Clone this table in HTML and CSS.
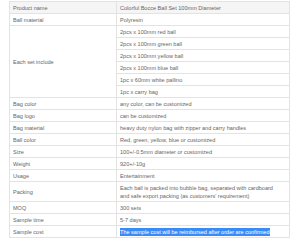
FILE: index.html
```html
<!DOCTYPE html>
<html lang="en">
<head>
  <meta charset="UTF-8" />
  <title>Colorful Bocce Ball Set</title>
  <link rel="stylesheet" href="styles.css">
</head>
<body>
  <!-- Product spec table -->
  <table class="spec">
    <tr class="head">
      <td class="label">Product name</td>
      <td>Colorful Bocce Ball Set 100mm Diameter</td>
    </tr>
    <tr>
      <td class="label">Ball material</td>
      <td>Polyresin</td>
    </tr>
    <tr>
      <td class="label" rowspan="6">Each set include</td>
      <td>2pcs x 100mm red ball</td>
    </tr>
    <tr><td>2pcs x 100mm green ball</td></tr>
    <tr><td>2pcs x 100mm yellow ball</td></tr>
    <tr><td>2pcs x 100mm blue ball</td></tr>
    <tr><td>1pc x 60mm white pallino</td></tr>
    <tr><td>1pc x carry bag</td></tr>
    <tr>
      <td class="label">Bag color</td>
      <td>any color, can be customized</td>
    </tr>
    <tr>
      <td class="label">Bag logo</td>
      <td>can be customized</td>
    </tr>
    <tr>
      <td class="label">Bag material</td>
      <td>heavy duty nylon bag with zipper and carry handles</td>
    </tr>
    <tr>
      <td class="label">Ball color</td>
      <td>Red, green, yellow, blue or customized</td>
    </tr>
    <tr>
      <td class="label">Size</td>
      <td>100+/-0.5mm diameter or customized</td>
    </tr>
    <tr>
      <td class="label">Weight</td>
      <td>920+/-10g</td>
    </tr>
    <tr>
      <td class="label">Usage</td>
      <td>Entertainment</td>
    </tr>
    <tr>
      <td class="label">Packing</td>
      <td>Each ball is packed into bubble bag, separated with cardboard<br>and safe export packing (as customers' requirement)</td>
    </tr>
    <tr>
      <td class="label">MOQ</td>
      <td>300 sets</td>
    </tr>
    <tr>
      <td class="label">Sample time</td>
      <td>5-7 days</td>
    </tr>
    <tr>
      <td class="label">Sample cost</td>
      <td><span class="selected">The sample cost will be reimbursed after order are confirmed</span></td>
    </tr>
  </table>
</body>
</html>
```

FILE: styles.css
```css
/* Base */
* {
  margin: 0;
  padding: 0;
  box-sizing: border-box;
}
body {
  background: #fff;
  font-family: 'Liberation Sans', Arial, sans-serif;
  color: #666;
}
/* Spec table */
.spec {
  margin: 1px 0 0 9px;
  width: 281px;
  border-collapse: collapse;
  font-size: 5.55px;
  line-height: 8px;
}
.spec td {
  border: 1px solid #e3e3e3;
  padding: 2px 3px 1px;
  vertical-align: middle;
  white-space: nowrap;
}
.spec td.label {
  width: 107px;
}
.spec .head td {
  background: #f5f5f5;
}
/* Text picked with the mouse */
.selected {
  display: inline-block;
  height: 8px;
  background: #3b8bf7;
  color: #fff;
}
```
